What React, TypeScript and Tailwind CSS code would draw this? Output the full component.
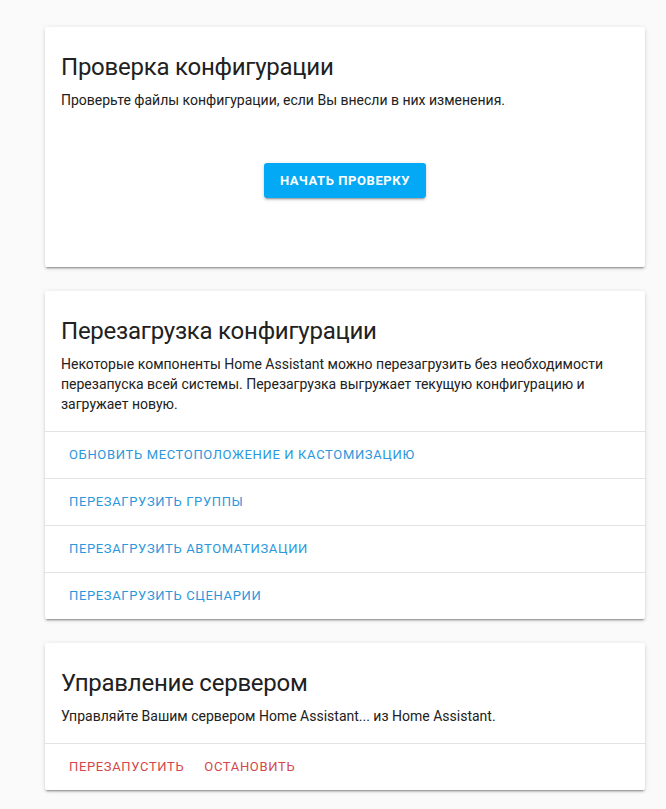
const font = { fontFamily: 'Roboto, "Noto Sans", sans-serif' };

function Card({ children }: { children: React.ReactNode }) {
  return (
    <div className="w-[600px] ml-[45px] bg-white rounded-[2px] shadow-[0_2px_2px_0_rgba(0,0,0,0.14),0_1px_5px_0_rgba(0,0,0,0.12),0_3px_1px_-2px_rgba(0,0,0,0.2)]">
      {children}
    </div>
  );
}

function Header({ title, text }: { title: string; text: string }) {
  return (
    <div className="px-4 pt-6 pb-[17px]">
      <h1 className="text-[24px] leading-[32px] text-[#212121] tracking-[-0.01em]">{title}</h1>
      <p className="mt-[7px] text-[14px] leading-[20px] text-[#212121]">{text}</p>
    </div>
  );
}

const reloads = [
  'Обновить местоположение и кастомизацию',
  'Перезагрузить группы',
  'Перезагрузить автоматизации',
  'Перезагрузить сценарии',
];

export default function App() {
  return (
    <div className="min-h-[809px] bg-[#fafafa] pt-[27px] pb-5" style={font}>
      <Card>
        <Header
          title="Проверка конфигурации"
          text="Проверьте файлы конфигурации, если Вы внесли в них изменения."
        />
        <div className="flex justify-center pt-[36px] pb-[69px]">
          <button className="h-[35px] px-4 rounded-[3px] bg-[#03a9f4] text-white text-[13px] font-bold uppercase tracking-[0.045em] shadow-[0_2px_2px_0_rgba(0,0,0,0.14),0_1px_5px_0_rgba(0,0,0,0.12),0_3px_1px_-2px_rgba(0,0,0,0.2)]">
            Начать проверку
          </button>
        </div>
      </Card>

      <div className="h-6" />

      <Card>
        <Header
          title="Перезагрузка конфигурации"
          text="Некоторые компоненты Home Assistant можно перезагрузить без необходимости перезапуска всей системы. Перезагрузка выгружает текущую конфигурацию и загружает новую."
        />
        {reloads.map((r) => (
          <div key={r} className="border-t border-[#e3e3e3] h-[47px] flex items-center px-6">
            <span className="text-[13px] font-normal uppercase tracking-[0.05em] text-[#2b97dc]">{r}</span>
          </div>
        ))}
      </Card>

      <div className="h-6" />

      <Card>
        <Header
          title="Управление сервером"
          text="Управляйте Вашим сервером Home Assistant... из Home Assistant."
        />
        <div className="border-t border-[#e3e3e3] h-[47px] flex items-center px-6 gap-5">
          <span className="text-[13px] font-normal uppercase tracking-[0.05em] text-[#d3474a]">Перезапустить</span>
          <span className="text-[13px] font-normal uppercase tracking-[0.05em] text-[#d3474a]">Остановить</span>
        </div>
      </Card>
    </div>
  );
}
